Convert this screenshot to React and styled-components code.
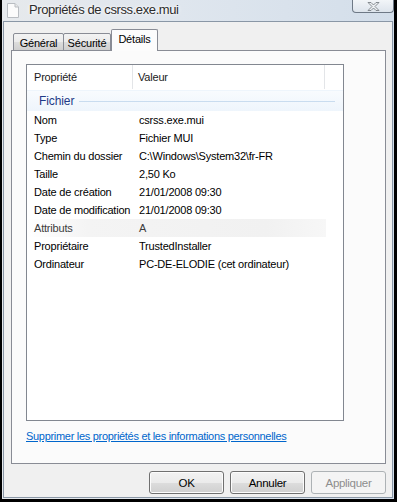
import React from "react";
import styled, { createGlobalStyle } from "styled-components";

const GlobalStyle = createGlobalStyle`
  * { box-sizing: border-box; }
  body {
    margin: 0;
    font-family: "Liberation Sans", Arial, sans-serif;
  }
`;

const Page = styled.div`
  width: 397px;
  height: 502px;
  background: #000;
  padding: 0 3px 3px 2px;
  display: flex;
`;

const Window = styled.div`
  flex: 1;
  display: flex;
  flex-direction: column;
  padding: 0 1px 1px 1px;
  background: linear-gradient(90deg, #e6e9ec 0%, #dfe6ee 45%, #d3deea 100%);
`;

const TitleBar = styled.div`
  height: 21px;
  display: flex;
  align-items: flex-start;
  padding-left: 4px;
`;

const TitleIcon = styled.svg`
  margin-top: 3px;
  flex-shrink: 0;
`;

const Title = styled.span`
  margin-left: 10px;
  margin-top: 2px;
  font-size: 13px;
  letter-spacing: -0.4px;
  color: #2b2b2b;
  text-shadow: 0 0 4px #fff, 0 0 2px #fff;
`;

const CloseButton = styled.div`
  margin-left: auto;
  margin-right: -1px;
  width: 42px;
  height: 13px;
  border: 1px solid #6e7986;
  border-top: none;
  border-radius: 0 0 4px 4px;
  background: linear-gradient(#f2f5f8, #dde4ec);
  display: flex;
  align-items: center;
  justify-content: center;
`;

const Content = styled.div`
  flex: 1;
  display: flex;
  flex-direction: column;
  background: #f0f0f0;
  border: 1px solid #8a97a6;
  padding: 7px 6px 3px 7px;
`;

const TabRow = styled.div`
  display: flex;
  align-items: flex-end;
  margin-left: 2px;
  height: 22px;
  margin-bottom: -1px;
  position: relative;
  z-index: 1;
`;

const Tab = styled.div`
  width: ${(p) => p.width}px;
  height: ${(p) => (p.active ? "22px" : "18px")};
  margin-left: ${(p) => (p.active ? "0" : "-1px")};
  display: flex;
  align-items: center;
  justify-content: center;
  padding-top: ${(p) => (p.active ? "0" : "1px")};
  padding-bottom: ${(p) => (p.active ? "3px" : "0")};
  font-size: 11px;
  letter-spacing: -0.2px;
  color: #000;
  border: 1px solid #898c95;
  border-bottom: ${(p) => (p.active ? "none" : "1px solid #898c95")};
  border-radius: 2px 2px 0 0;
  background: ${(p) =>
    p.active ? "#fcfcfc" : "linear-gradient(#f3f3f3 0%, #ebebeb 50%, #dddddd 51%, #cfcfcf 100%)"};
  &:first-child {
    margin-left: 0;
  }
`;

const Panel = styled.div`
  flex: 1;
  display: flex;
  flex-direction: column;
  background: #fbfbfb;
  border: 1px solid #898c95;
  padding: 13px 0 0 14px;
`;

const ListBox = styled.div`
  width: 318px;
  height: 357px;
  background: #fff;
  border: 1px solid #828790;
  display: flex;
  flex-direction: column;
`;

const HeaderRow = styled.div`
  display: flex;
  height: 24px;
  flex-shrink: 0;
`;

const HeaderCell = styled.div`
  width: ${(p) => p.width}px;
  padding-left: ${(p) => p.pad}px;
  display: flex;
  align-items: center;
  font-size: 11px;
  letter-spacing: -0.2px;
  color: #1a1a1a;
  border-right: 1px solid ${(p) => (p.last ? "transparent" : "#e3e5e8")};
`;

const Group = styled.div`
  height: 21px;
  margin-top: 1px;
  display: flex;
  align-items: center;
  padding-left: 12px;
  padding-right: 8px;
  background: linear-gradient(#f8fbfe, #eef5fc);
  border-top: 1px solid #eef5fc;
  font-size: 12px;
  letter-spacing: -0.1px;
  color: #1e3a87;
`;

const GroupLine = styled.div`
  flex: 1;
  height: 1px;
  margin-left: 5px;
  background: #c9dcef;
`;

const Row = styled.div`
  display: flex;
  height: 18px;
  align-items: center;
  font-size: 11px;
  letter-spacing: -0.2px;
  color: ${(p) => (p.faded ? "#3c3c3c" : "#000")};
  margin-right: 17px;
  background: ${(p) =>
    p.faded ? "linear-gradient(90deg, #fff 0%, #f4f4f4 20%, #f1f1f1 80%, #f7f7f7 100%)" : "transparent"};
`;

const Label = styled.span`
  width: 106px;
  padding-left: 7px;
  white-space: nowrap;
`;

const Value = styled.span`
  padding-left: 6px;
  white-space: nowrap;
`;

const Link = styled.a`
  margin-top: 9px;
  font-size: 11px;
  letter-spacing: -0.3px;
  color: #0066cc;
  text-decoration: underline;
  cursor: pointer;
`;

const Footer = styled.div`
  display: flex;
  justify-content: flex-end;
  gap: 6px;
  margin-top: 7px;
`;

const Button = styled.button`
  width: ${(p) => p.width}px;
  height: 23px;
  font-family: "Liberation Sans", Arial, sans-serif;
  font-size: 11.5px;
  letter-spacing: -0.3px;
  color: ${(p) => (p.disabled ? "#8d8d8d" : "#000")};
  border: 1px solid ${(p) => (p.disabled ? "#adb2b5" : "#707070")};
  border-radius: 3px;
  background: ${(p) =>
    p.disabled
      ? "#f4f4f4"
      : "linear-gradient(#f2f2f2 0%, #ebebeb 50%, #dddddd 51%, #cfcfcf 100%)"};
  box-shadow: inset 0 0 0 1px ${(p) => (p.disabled ? "#f4f4f4" : "#fcfcfc")};
  padding: 0;
`;

const rows = [
  ["Nom", "csrss.exe.mui"],
  ["Type", "Fichier MUI"],
  ["Chemin du dossier", "C:\\Windows\\System32\\fr-FR"],
  ["Taille", "2,50 Ko"],
  ["Date de création", "21/01/2008 09:30"],
  ["Date de modification", "21/01/2008 09:30"],
  ["Attributs", "A", true],
  ["Propriétaire", "TrustedInstaller"],
  ["Ordinateur", "PC-DE-ELODIE (cet ordinateur)"],
];

const App = () => {
  return (
    <>
      <GlobalStyle />
      <Page>
        <Window>
          <TitleBar>
            <TitleIcon width="12" height="15" viewBox="0 0 12 15">
              <path d="M0.5 0.5 H8 L11.5 4 V14.5 H0.5 Z" fill="#fbfbfb" stroke="#b9bdc2" />
              <path d="M8 0.5 V4 H11.5" fill="#e8e8e8" stroke="#b9bdc2" />
            </TitleIcon>
            <Title>Propriétés de csrss.exe.mui</Title>
            <CloseButton>
              <svg width="13" height="9" viewBox="0 0 13 9">
                <path
                  d="M1 0.5 H4 L6.5 3 L9 0.5 H12 L8 4.5 L12 8.5 H9 L6.5 6 L4 8.5 H1 L5 4.5 Z"
                  fill="#eef1f4"
                  stroke="#6d737a"
                  strokeWidth="0.8"
                />
              </svg>
            </CloseButton>
          </TitleBar>
          <Content>
            <TabRow>
              <Tab width={51}>Général</Tab>
              <Tab width={48}>Sécurité</Tab>
              <Tab active width={47}>Détails</Tab>
            </TabRow>
            <Panel>
              <ListBox>
                <HeaderRow>
                  <HeaderCell width={106} pad={7}>Propriété</HeaderCell>
                  <HeaderCell width={192} pad={5}>Valeur</HeaderCell>
                  <HeaderCell last width={18} pad={0} />
                </HeaderRow>
                <Group>
                  Fichier
                  <GroupLine />
                </Group>
                {rows.map(([label, value, faded]) => (
                  <Row key={label} faded={faded}>
                    <Label>{label}</Label>
                    <Value>{value}</Value>
                  </Row>
                ))}
              </ListBox>
              <Link>Supprimer les propriétés et les informations personnelles</Link>
            </Panel>
            <Footer>
              <Button width={75}>OK</Button>
              <Button width={75}>Annuler</Button>
              <Button width={75} disabled>
                Appliquer
              </Button>
            </Footer>
          </Content>
        </Window>
      </Page>
    </>
  );
};

export default App;
